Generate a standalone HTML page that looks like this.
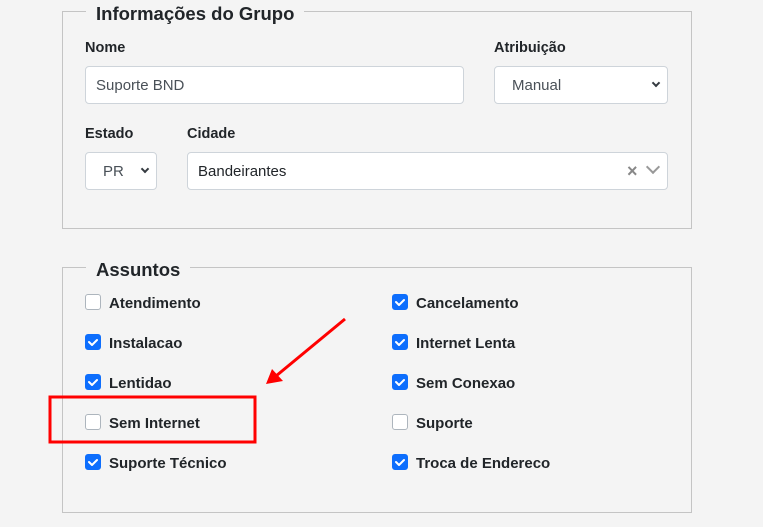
<!DOCTYPE html>
<html><head><style>
body{margin:0;width:763px;height:527px;background:#f4f4f4;font-family:"Liberation Sans",sans-serif;color:#212529;position:relative;overflow:hidden}
.a{position:absolute}
.fs{position:absolute;border:1px solid #c4c4c4;left:62px;width:628px}
.lg{position:absolute;background:#f4f4f4;padding:0 10px;font-size:18.5px;font-weight:bold;color:#212529}
.lb{position:absolute;font-size:14.5px;font-weight:bold}
.in{position:absolute;background:#fff;border:1px solid #ced4da;border-radius:4px;box-sizing:border-box;height:38px;font-size:15px;color:#495057;line-height:38px}
.cb{position:absolute;width:14px;height:14px;border:1px solid #adb5bd;border-radius:3px;background:#fff}
.cb.on{background:#0d6efd;border-color:#0d6efd}
.ct{position:absolute;font-size:15px;font-weight:bold}
.chev{position:absolute;width:6px;height:6px;border-right:2px solid #343a40;border-bottom:2px solid #343a40;transform:rotate(45deg)}
</style></head><body>
<div class="fs" style="top:11px;height:216px"></div>
<div class="lg" style="left:86px;top:3px">Informações do Grupo</div>
<div class="lb" style="left:85px;top:40px">Nome</div>
<div class="lb" style="left:494px;top:40px">Atribuição</div>
<div class="in" style="left:85px;top:66px;width:379px;padding-left:10px">Suporte BND</div>
<div class="in" style="left:494px;top:66px;width:174px;padding-left:17px">Manual</div>
<div class="chev" style="left:653px;top:80px;width:4px;height:4px"></div>
<div class="lb" style="left:85px;top:126px">Estado</div>
<div class="lb" style="left:187px;top:126px">Cidade</div>
<div class="in" style="left:85px;top:152px;width:72px;padding-left:17px">PR</div>
<div class="chev" style="left:142px;top:166px;width:4px;height:4px"></div>
<div class="in" style="left:187px;top:152px;width:481px;padding-left:10px;color:#212529">Bandeirantes</div>
<div class="a" style="left:627px;top:161px;font-size:18px;color:#888;font-weight:bold">×</div>
<div class="chev" style="left:648px;top:162px;width:8px;height:8px;border-color:#999"></div>

<div class="fs" style="top:267px;height:244px"></div>
<div class="lg" style="left:86px;top:259px">Assuntos</div>

<div class="cb" style="left:85px;top:294px"></div><div class="ct" style="left:109px;top:295px">Atendimento</div>
<div class="cb on" style="left:85px;top:334px"></div><div class="ct" style="left:109px;top:335px">Instalacao</div>
<div class="cb on" style="left:85px;top:374px"></div><div class="ct" style="left:109px;top:375px">Lentidao</div>
<div class="cb" style="left:85px;top:414px"></div><div class="ct" style="left:109px;top:415px">Sem Internet</div>
<div class="cb on" style="left:85px;top:454px"></div><div class="ct" style="left:109px;top:455px">Suporte Técnico</div>

<div class="cb on" style="left:392px;top:294px"></div><div class="ct" style="left:416px;top:295px">Cancelamento</div>
<div class="cb on" style="left:392px;top:334px"></div><div class="ct" style="left:416px;top:335px">Internet Lenta</div>
<div class="cb on" style="left:392px;top:374px"></div><div class="ct" style="left:416px;top:375px">Sem Conexao</div>
<div class="cb" style="left:392px;top:414px"></div><div class="ct" style="left:416px;top:415px">Suporte</div>
<div class="cb on" style="left:392px;top:454px"></div><div class="ct" style="left:416px;top:455px">Troca de Endereco</div>

<svg class="a" style="left:0;top:0" width="763" height="527">
<g fill="none" stroke="#fff" stroke-width="2" stroke-linecap="round" stroke-linejoin="round">
<path d="M89 342l3 3 5-5M89 382l3 3 5-5M89 462l3 3 5-5M396 302l3 3 5-5M396 342l3 3 5-5M396 382l3 3 5-5M396 462l3 3 5-5"/>
</g>
<rect x="50" y="397" width="205" height="45" fill="none" stroke="#ff0000" stroke-width="3"/>
<line x1="345" y1="319" x2="276" y2="376" stroke="#ff0000" stroke-width="3"/>
<polygon points="266,384 272,369 283,381" fill="#ff0000"/>
</svg>
</body></html>
